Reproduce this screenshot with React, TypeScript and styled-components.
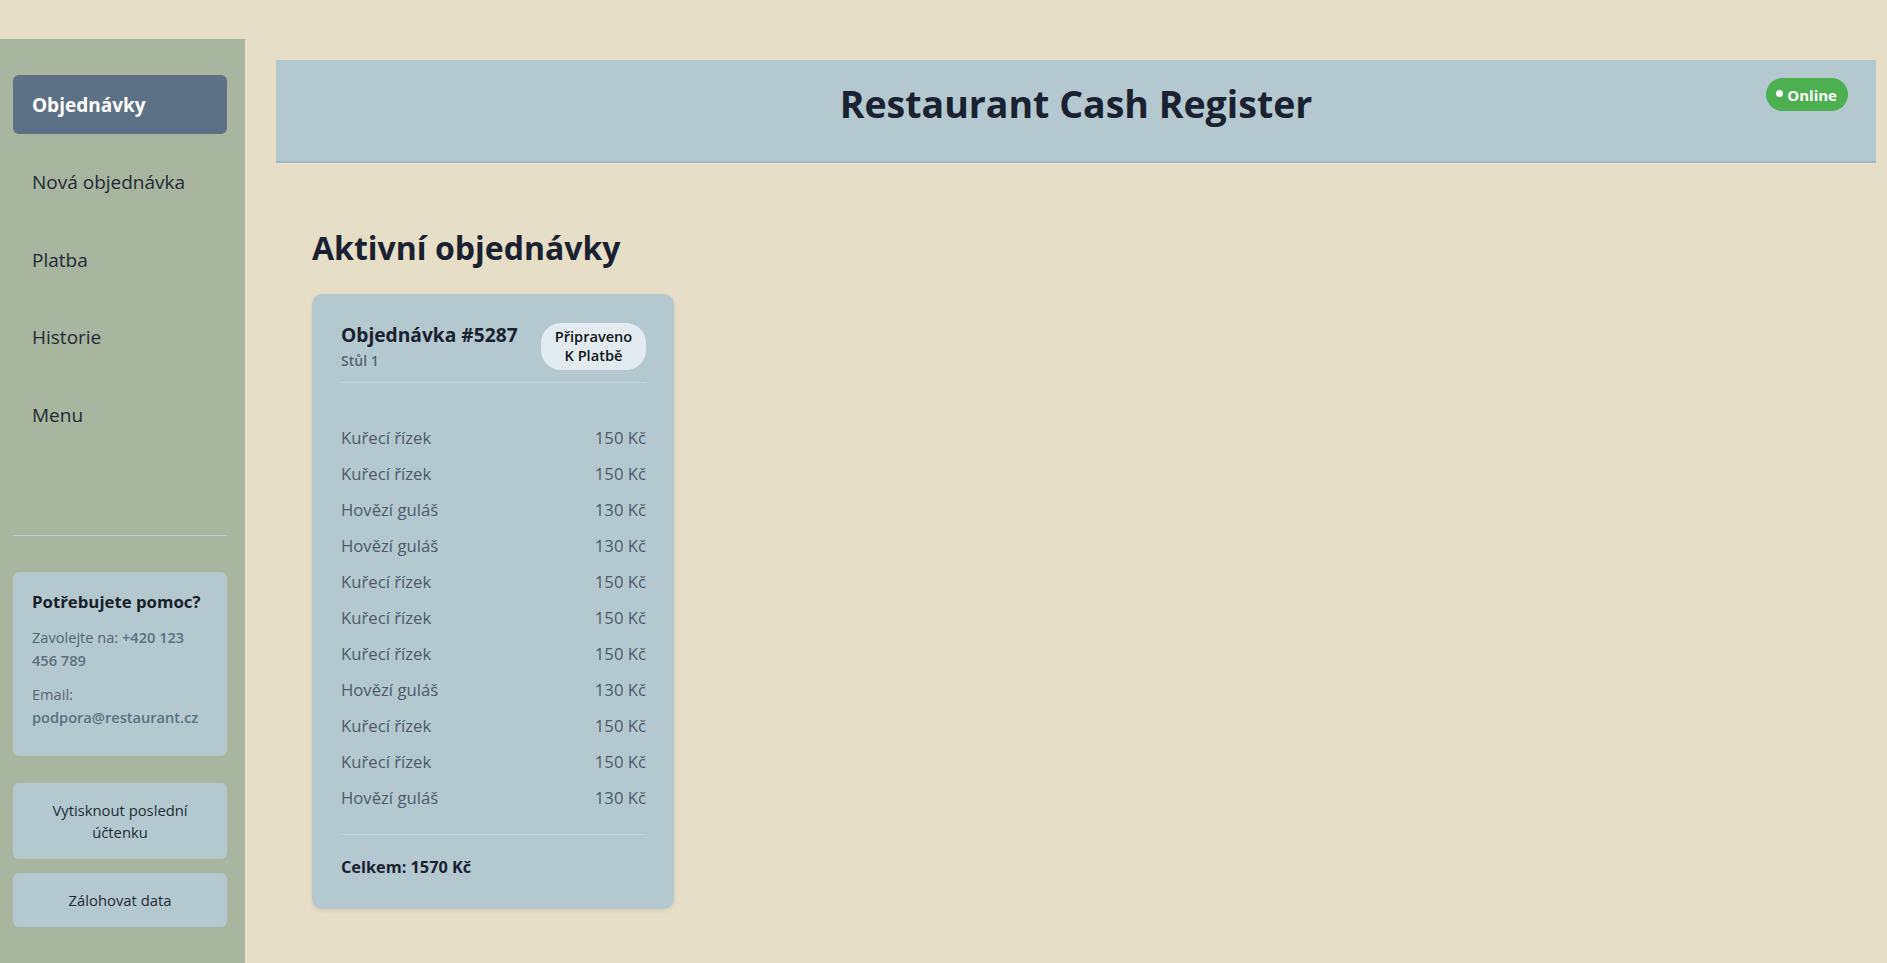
import React from "react";
import styled, { createGlobalStyle } from "styled-components";

const FONT = `"Segoe UI", "Open Sans", "Noto Sans", sans-serif`;

const Global = createGlobalStyle`
  html, body { margin: 0; padding: 0; }
  body {
    background: #e6dec6;
    font-family: ${FONT};
    color: #1a202c;
    -webkit-font-smoothing: antialiased;
  }
  * { box-sizing: border-box; }
`;

const Layout = styled.div`
  display: flex;
  align-items: stretch;
  min-height: 100vh;
`;

const Sidebar = styled.aside`
  width: 245px;
  flex-shrink: 0;
  margin-top: 39px;
  background: #a8b59f;
  padding: 36px 18px 30px 13px;
  display: flex;
  flex-direction: column;
`;

const Nav = styled.nav`
  display: flex;
  flex-direction: column;
  gap: 18.5px;
`;

const NavItem = styled.a<{ $active?: boolean }>`
  display: flex;
  align-items: center;
  height: 59px;
  padding: 0 19px;
  border-radius: 6px;
  font-size: 19px;
  font-weight: ${(p) => (p.$active ? 700 : 400)};
  color: ${(p) => (p.$active ? "#ffffff" : "#1f2b36")};
  background: ${(p) => (p.$active ? "#5c7185" : "transparent")};
  text-decoration: none;
  cursor: pointer;
`;

const Divider = styled.hr`
  border: none;
  border-top: 1px solid #b9cdd5;
  margin: 91px 0 36px;
`;

const HelpCard = styled.div`
  background: #b4c8d0;
  border-radius: 6px;
  padding: 19px 19px 27px;
  display: flex;
  flex-direction: column;
`;

const HelpTitle = styled.div`
  font-size: 16.8px;
  font-weight: 700;
  color: #18202a;
  line-height: 22px;
  margin-bottom: 13px;
`;

const HelpText = styled.p`
  margin: 0 0 11px;
  font-size: 14.6px;
  line-height: 23px;
  color: #556574;
  &:last-child { margin-bottom: 0; }
`;

const Strong = styled.span`
  font-weight: 600;
  color: #5d6f80;
`;

const SideButton = styled.button<{ $first?: boolean }>`
  width: 100%;
  margin-top: ${(p) => (p.$first ? "27px" : "14px")};
  background: #b4c8d0;
  border: none;
  border-radius: 6px;
  padding: 16px 18px 16px;
  font-family: ${FONT};
  font-size: 14.8px;
  line-height: 22px;
  color: #1f2b36;
  text-align: center;
  cursor: pointer;
`;

const Main = styled.main`
  flex: 1;
  padding: 60px 11px 40px 31px;
  display: flex;
  flex-direction: column;
`;

const Header = styled.header`
  position: relative;
  height: 103px;
  background: #b4c8d0;
  border-bottom: 2px solid #a3b8c2;
  display: flex;
  justify-content: center;
  padding-top: 14px;
`;

const Title = styled.h1`
  margin: 0;
  font-size: 37.5px;
  font-weight: 700;
  line-height: 60px;
  color: #1a2130;
`;

const OnlineBadge = styled.div`
  position: absolute;
  top: 18px;
  right: 28px;
  height: 33px;
  padding: 0 11px 0 10px;
  border-radius: 17px;
  background: #4caf50;
  color: #ffffff;
  font-size: 15px;
  font-weight: 700;
  display: flex;
  align-items: center;
  gap: 4px;
`;

const Dot = styled.span`
  width: 7px;
  height: 7px;
  border-radius: 50%;
  background: #ffffff;
  margin-top: -3px;
`;

const Content = styled.section`
  padding: 62px 36px 0;
`;

const SectionTitle = styled.h2`
  margin: 0 0 23px;
  font-size: 32px;
  font-weight: 700;
  line-height: 46px;
  color: #1a2130;
`;

const Card = styled.div`
  width: 362px;
  background: #b4c8d0;
  border-radius: 10px;
  box-shadow: 0 2px 4px rgba(0, 0, 0, 0.08);
  padding: 26px 28px 30px 29px;
`;

const CardHeader = styled.div`
  display: flex;
  justify-content: space-between;
  align-items: center;
  padding-bottom: 10px;
  border-bottom: 1px solid #c3d5dc;
`;

const OrderTitle = styled.div`
  font-size: 19.2px;
  font-weight: 700;
  line-height: 30px;
  color: #1a2130;
`;

const TableLabel = styled.div`
  font-size: 14px;
  font-weight: 600;
  line-height: 22px;
  color: #566573;
`;

const StatusBadge = styled.div`
  width: 105px;
  height: 47px;
  border-radius: 20px;
  background: #e2ecf0;
  color: #101418;
  font-size: 14.6px;
  font-weight: 600;
  line-height: 19px;
  text-align: center;
  display: flex;
  align-items: center;
  justify-content: center;
`;

const ItemList = styled.ul`
  list-style: none;
  margin: 36px 0 0;
  padding: 0 0 19px;
  border-bottom: 1px solid #c3d5dc;
`;

const ItemRow = styled.li`
  display: flex;
  justify-content: space-between;
  align-items: center;
  height: 36px;
  font-size: 16.7px;
  color: #4d5b69;
`;

const Total = styled.div`
  padding-top: 20px;
  font-size: 16.3px;
  font-weight: 700;
  line-height: 24px;
  color: #1a2130;
`;

const items: [string, number][] = [
  ["Kuřecí řízek", 150],
  ["Kuřecí řízek", 150],
  ["Hovězí guláš", 130],
  ["Hovězí guláš", 130],
  ["Kuřecí řízek", 150],
  ["Kuřecí řízek", 150],
  ["Kuřecí řízek", 150],
  ["Hovězí guláš", 130],
  ["Kuřecí řízek", 150],
  ["Kuřecí řízek", 150],
  ["Hovězí guláš", 130],
];

const navItems = ["Objednávky", "Nová objednávka", "Platba", "Historie", "Menu"];

export default function App() {
  const total = items.reduce((s, [, p]) => s + p, 0);
  return (
    <>
      <Global />
      <Layout>
        <Sidebar>
          <Nav>
            {navItems.map((n, i) => (
              <NavItem key={n} $active={i === 0}>
                {n}
              </NavItem>
            ))}
          </Nav>
          <Divider />
          <HelpCard>
            <HelpTitle>Potřebujete pomoc?</HelpTitle>
            <HelpText>
              Zavolejte na: <Strong>+420 123 456 789</Strong>
            </HelpText>
            <HelpText>
              Email: <Strong>podpora@restaurant.cz</Strong>
            </HelpText>
          </HelpCard>
          <SideButton $first>Vytisknout poslední účtenku</SideButton>
          <SideButton>Zálohovat data</SideButton>
        </Sidebar>
        <Main>
          <Header>
            <Title>Restaurant Cash Register</Title>
            <OnlineBadge>
              <Dot />
              Online
            </OnlineBadge>
          </Header>
          <Content>
            <SectionTitle>Aktivní objednávky</SectionTitle>
            <Card>
              <CardHeader>
                <div>
                  <OrderTitle>Objednávka #5287</OrderTitle>
                  <TableLabel>Stůl 1</TableLabel>
                </div>
                <StatusBadge>
                  Připraveno
                  <br />K Platbě
                </StatusBadge>
              </CardHeader>
              <ItemList>
                {items.map(([name, price], i) => (
                  <ItemRow key={i}>
                    <span>{name}</span>
                    <span>{price} Kč</span>
                  </ItemRow>
                ))}
              </ItemList>
              <Total>Celkem: {total} Kč</Total>
            </Card>
          </Content>
        </Main>
      </Layout>
    </>
  );
}
